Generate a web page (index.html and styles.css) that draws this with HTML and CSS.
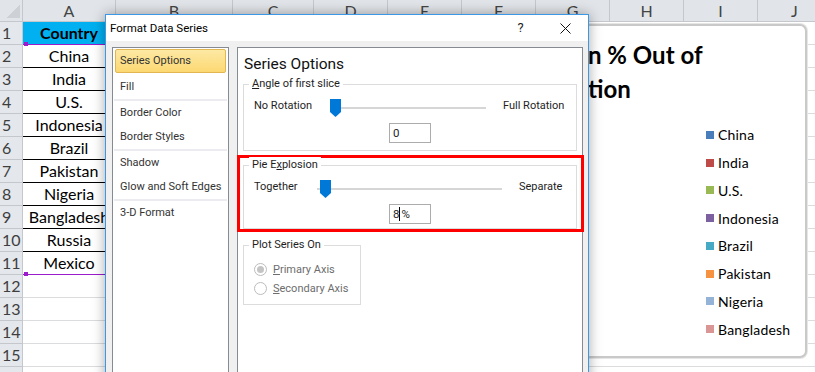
FILE: index.html
```html
<!DOCTYPE html>
<html lang="en">
<head>
  <meta charset="UTF-8" />
  <title>Format Data Series</title>
  <link rel="stylesheet" href="styles.css">
</head>
<body>

<div class="sheet">

  <div class="col-heads">
    <div class="corner"><span></span></div>
    <div class="ch ch-a">A</div>
    <div class="ch ch-b">B</div>
    <div class="ch ch-c">C</div>
    <div class="ch">D</div>
    <div class="ch">E</div>
    <div class="ch">F</div>
    <div class="ch">G</div>
    <div class="ch">H</div>
    <div class="ch">I</div>
    <div class="ch">J</div>
  </div>

  <div class="row"><div class="rh">1</div><div class="cell head-cell sel">Country</div><div class="rest"></div></div>
  <div class="row"><div class="rh">2</div><div class="cell data">China</div><div class="rest"></div></div>
  <div class="row"><div class="rh">3</div><div class="cell data">India</div><div class="rest"></div></div>
  <div class="row"><div class="rh">4</div><div class="cell data">U.S.</div><div class="rest"></div></div>
  <div class="row"><div class="rh">5</div><div class="cell data">Indonesia</div><div class="rest"></div></div>
  <div class="row"><div class="rh">6</div><div class="cell data">Brazil</div><div class="rest"></div></div>
  <div class="row"><div class="rh">7</div><div class="cell data">Pakistan</div><div class="rest"></div></div>
  <div class="row"><div class="rh">8</div><div class="cell data">Nigeria</div><div class="rest"></div></div>
  <div class="row"><div class="rh">9</div><div class="cell data">Bangladesh</div><div class="rest"></div></div>
  <div class="row"><div class="rh">10</div><div class="cell data">Russia</div><div class="rest"></div></div>
  <div class="row"><div class="rh">11</div><div class="cell data sel">Mexico</div><div class="rest"></div></div>
  <div class="row"><div class="rh">12</div><div class="cell"></div><div class="rest"></div></div>
  <div class="row"><div class="rh">13</div><div class="cell"></div><div class="rest"></div></div>
  <div class="row"><div class="rh">14</div><div class="cell"></div><div class="rest"></div></div>
  <div class="row"><div class="rh">15</div><div class="cell"></div><div class="rest"></div></div>
  <div class="row"><div class="rh"></div><div class="cell"></div><div class="rest"></div></div>

  <!-- chart sits behind the dialog -->
  <div class="chart">
    <div class="chart-title">n % Out of<br>tion</div>
    <div class="legend">
      <div class="legend-item"><span class="swatch sw-china"></span>China</div>
      <div class="legend-item"><span class="swatch sw-india"></span>India</div>
      <div class="legend-item"><span class="swatch sw-us"></span>U.S.</div>
      <div class="legend-item"><span class="swatch sw-indonesia"></span>Indonesia</div>
      <div class="legend-item"><span class="swatch sw-brazil"></span>Brazil</div>
      <div class="legend-item"><span class="swatch sw-pakistan"></span>Pakistan</div>
      <div class="legend-item"><span class="swatch sw-nigeria"></span>Nigeria</div>
      <div class="legend-item"><span class="swatch sw-bangladesh"></span>Bangladesh</div>
    </div>
  </div>

  <div class="dialog">
    <div class="titlebar">
      <span class="title">Format Data Series</span>
      <span class="tb-btn">?</span>
      <span class="tb-btn">
        <svg width="11" height="11" viewBox="0 0 11 11"><path d="M0.5 0.5L10.5 10.5M10.5 0.5L0.5 10.5" stroke="#111" stroke-width="1"/></svg>
      </span>
    </div>

    <div class="dialog-body">
      <div class="nav">
        <div class="nav-item active">Series Options</div>
        <div class="nav-item">Fill</div>
        <div class="nav-sep"></div>
        <div class="nav-item">Border Color</div>
        <div class="nav-item">Border Styles</div>
        <div class="nav-sep"></div>
        <div class="nav-item">Shadow</div>
        <div class="nav-item">Glow and Soft Edges</div>
        <div class="nav-sep"></div>
        <div class="nav-item">3-D Format</div>
      </div>

      <div class="panel">
        <div class="panel-title">Series Options</div>

        <div class="group group-angle">
          <div class="group-title"><u>A</u>ngle of first slice</div>
          <div class="slider-row">
            <span class="lbl lbl-angle">No Rotation</span>
            <div class="slider slider-angle">
              <svg class="thumb" width="11" height="18" viewBox="0 0 11 18"><path d="M0 0H11V13L5.5 18L0 13Z" fill="#0078d7"/></svg>
            </div>
            <span class="lbl-end">Full Rotation</span>
          </div>
          <div class="num">0</div>
        </div>

        <div class="highlight">
          <div class="group group-explode">
            <div class="group-title">Pie E<u>x</u>plosion</div>
            <div class="slider-row">
              <span class="lbl lbl-explode">Together</span>
              <div class="slider slider-explode">
                <svg class="thumb thumb-8" width="11" height="18" viewBox="0 0 11 18"><path d="M0 0H11V13L5.5 18L0 13Z" fill="#0078d7"/></svg>
              </div>
              <span class="lbl-end">Separate</span>
            </div>
            <div class="num">8<span class="caret"></span>%</div>
          </div>
        </div>

        <div class="group group-plot">
          <div class="group-title">Plot Series On</div>
          <div class="radio first"><span class="dot checked"></span><span><u>P</u>rimary Axis</span></div>
          <div class="radio"><span class="dot"></span><span><u>S</u>econdary Axis</span></div>
        </div>
      </div>
    </div>
  </div>

</div>

</body>
</html>
```

FILE: styles.css
```css
body {
  margin: 0;
  font-family: Lato, "Liberation Sans", sans-serif;
  background: #fff;
  color: #000;
  overflow: hidden;
}
.sheet {
  position: relative;
  width: 815px;
  height: 372px;
  overflow: hidden;
}

/* column + row headers */
.col-heads {
  display: flex;
  height: 22px;
  background: #e1e4e8;
  border-bottom: 1px solid #c4c8cc;
  box-sizing: border-box;
}
.corner {
  flex: none;
  width: 23px;
  box-sizing: border-box;
  border-right: 1px solid #c4c8cc;
  display: flex;
  align-items: flex-end;
  justify-content: flex-end;
  padding: 0 2px 3px 0;
}
.corner span {
  width: 14px;
  height: 14px;
  background: linear-gradient(135deg, transparent 50%, #cdd0d4 50%);
}
.ch {
  flex: none;
  width: 74px;
  box-sizing: border-box;
  border-right: 1px solid #c4c8cc;
  text-align: center;
  font-size: 16px;
  line-height: 21px;
  color: #444;
}
.ch-a { width: 93px; }
.ch-b { width: 117px; }
.ch-c { width: 81px; }

.row {
  display: flex;
  height: 23px;
}
.rh {
  flex: none;
  width: 23px;
  box-sizing: border-box;
  background: #e4e7eb;
  border-right: 1px solid #c4c8cc;
  border-bottom: 1px solid #c4c8cc;
  padding-left: 2px;
  font-size: 16px;
  line-height: 22px;
  color: #3e3e3e;
}
.cell {
  position: relative;
  flex: none;
  width: 93px;
  box-sizing: border-box;
  border-right: 1px solid #dadcdd;
  border-bottom: 1px solid #dadcdd;
  text-align: center;
  font-size: 16px;
  line-height: 22px;
  white-space: nowrap;
}
.rest {
  flex: 1;
  border-bottom: 1px solid #dadcdd;
}
.head-cell {
  background: #00b0f0;
  font-weight: bold;
}
.data {
  border-bottom-color: #000;
}
.cell.sel {
  border-bottom: 1px solid #9a1ccb;
}
.cell.sel::after {
  content: "";
  position: absolute;
  left: 1px;
  bottom: -2px;
  width: 4px;
  height: 4px;
  background: #9a1ccb;
}

/* chart behind the dialog */
.chart {
  position: absolute;
  left: 540px;
  top: 24px;
  width: 267px;
  height: 334px;
  box-sizing: border-box;
  background: #fff;
  border: 2px solid #c9c9c9;
  border-radius: 7px;
  box-shadow: 0 0 0 1px #e6e6e6;
}
.chart-title {
  padding: 12px 0 0 46px;
  font-size: 24px;
  font-weight: bold;
  line-height: 34px;
  white-space: nowrap;
}
.legend {
  margin: 15px 0 0 164px;
}
.legend-item {
  display: flex;
  align-items: center;
  height: 27.75px;
  font-size: 14px;
  letter-spacing: 0.2px;
}
.swatch {
  width: 8px;
  height: 8px;
  margin-right: 4px;
}
.sw-china { background: #4a7ebb; }
.sw-india { background: #be4b48; }
.sw-us { background: #98b954; }
.sw-indonesia { background: #7d60a0; }
.sw-brazil { background: #46aac5; }
.sw-pakistan { background: #f69240; }
.sw-nigeria { background: #95b3d7; }
.sw-bangladesh { background: #d99694; }

/* dialog */
.dialog {
  position: absolute;
  left: 105px;
  top: 14px;
  width: 484px;
  height: 400px;
  box-sizing: border-box;
  border: 1px solid #3c97e6;
  background: #f0f0f0;
  box-shadow: 0 0 12px rgb(0 0 0 / 0.35);
  font-family: Roboto, "Liberation Sans", sans-serif;
  font-size: 11px;
  color: #1e1e1e;
}
.titlebar {
  display: flex;
  align-items: center;
  height: 26px;
  background: #fff;
  padding-left: 4px;
}
.title {
  flex: 1;
  font-size: 11.5px;
  color: #000;
}
.tb-btn {
  width: 45px;
  font-size: 13px;
  line-height: 26px;
  display: flex;
  align-items: center;
  justify-content: center;
}
.dialog-body {
  display: flex;
  gap: 8px;
  padding: 6px 5px 0 6px;
}
.nav {
  flex: none;
  width: 117px;
  height: 340px;
  box-sizing: border-box;
  border: 1px solid #868a91;
  background: #fff;
}
.nav-item {
  height: 24px;
  box-sizing: border-box;
  margin: 0 2px;
  padding-left: 4px;
  border: 1px solid transparent;
  line-height: 22px;
  color: #333;
  white-space: nowrap;
}
.nav-item.active {
  margin: 1px 2px 2px;
  border-color: #e2b650;
  border-radius: 2px;
  background: linear-gradient(#fde9a4, #fcd872);
}
.nav-sep {
  height: 2px;
  margin: 0 1px;
  background: #ebebf0;
}
.panel {
  flex: none;
  width: 346px;
  height: 340px;
  box-sizing: border-box;
  border: 1px solid #868a91;
  background: #fff;
  padding: 6px 5px 0;
}
.panel-title {
  padding-left: 1px;
  font-size: 15.5px;
  line-height: 20px;
  color: #111;
}

.group {
  box-sizing: border-box;
  border: 1px solid #dcdcdc;
}
.group-title {
  display: table;
  margin: -9px 0 0 5px;
  padding: 0 3px;
  background: #fff;
  line-height: 16px;
}
.group-angle {
  margin-top: 10px;
  height: 67px;
}
.slider-row {
  display: flex;
  align-items: center;
  height: 20px;
  margin-top: 3px;
  padding-left: 10px;
}
.lbl {
  flex: none;
}
.lbl-angle { width: 76px; }
.lbl-explode { width: 63px; }
.lbl-end {
  margin-left: 17px;
  white-space: nowrap;
}
.slider {
  position: relative;
  flex: none;
  height: 20px;
}
.slider::before {
  content: "";
  position: absolute;
  left: 0;
  right: 0;
  top: 12px;
  height: 2px;
  background: #d6d6d6;
}
.slider-angle { width: 156px; }
.slider-explode { width: 185px; }
.thumb {
  position: absolute;
  left: 0;
  top: 4px;
}
.thumb-8 { left: 3px; }
.num {
  width: 42px;
  height: 20px;
  box-sizing: border-box;
  margin: 8px auto 0;
  border: 1px solid #acacac;
  padding-left: 3px;
  line-height: 18px;
  font-size: 11.5px;
}
.caret {
  display: inline-block;
  width: 1px;
  height: 14px;
  margin: 0 1px 0 0;
  background: #000;
  vertical-align: -3px;
}

.highlight {
  margin: 4px -7px 0 -6px;
  border: 3px solid #f00;
}
.group-explode {
  margin: 7px 4px 0 3px;
  height: 64px;
}
.group-plot {
  margin-top: 13px;
  width: 118px;
  height: 60px;
}
.radio {
  display: flex;
  align-items: center;
  gap: 6px;
  height: 19px;
  padding-left: 10px;
  color: #6d6d6d;
  white-space: nowrap;
}
.radio.first { margin-top: 7px; }
.dot {
  flex: none;
  width: 13px;
  height: 13px;
  box-sizing: border-box;
  border: 1px solid #bcbcbc;
  border-radius: 50%;
  background: #fff;
  display: flex;
  align-items: center;
  justify-content: center;
}
.dot.checked::after {
  content: "";
  width: 7px;
  height: 7px;
  border-radius: 50%;
  background: #c4c4c4;
}
```
